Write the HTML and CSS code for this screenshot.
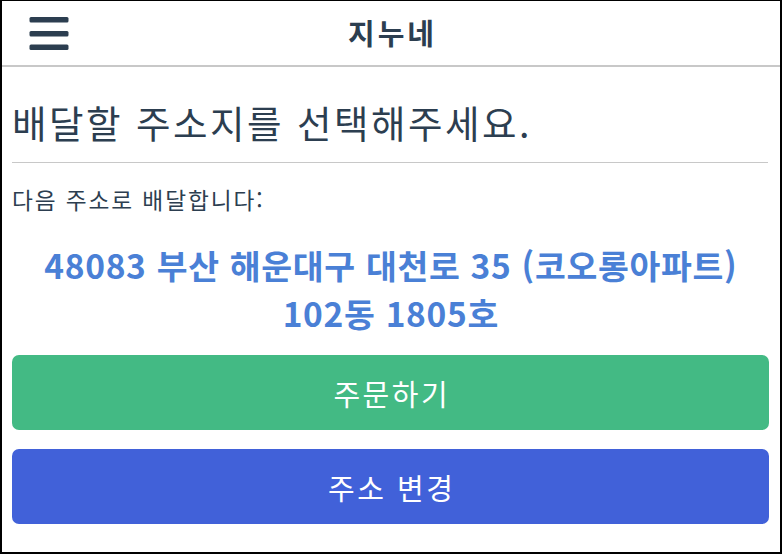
FILE: index.html
```html
<!DOCTYPE html>
<html lang="ko">
<head>
<meta charset="utf-8">
<title>지누네</title>
<link rel="stylesheet" href="styles.css">
</head>
<body>
<div class="app">
  <header class="topbar">
    <button class="menu" aria-label="메뉴">
      <svg width="40" height="34" viewBox="0 0 40 34">
        <rect x="0.5" y="0" width="39" height="5.5" rx="1.5" fill="#2c3e50"/>
        <rect x="0.5" y="14" width="39" height="5.5" rx="1.5" fill="#2c3e50"/>
        <rect x="0.5" y="27.5" width="39" height="5.5" rx="1.5" fill="#2c3e50"/>
      </svg>
    </button>
    <h1 class="brand">지누네</h1>
    <span class="spacer"></span>
  </header>
  <main class="content">
    <h2 class="title">배달할 주소지를 선택해주세요.</h2>
    <p class="label">다음 주소로 배달합니다:</p>
    <p class="address">48083 부산 해운대구 대천로 35 (코오롱아파트)<br>102동 1805호</p>
    <button class="btn btn-order">주문하기</button>
    <button class="btn btn-change">주소 변경</button>
  </main>
</div>
</body>
</html>
```
FILE: styles.css
```css
* { box-sizing: border-box; }
html, body { margin: 0; padding: 0; background: #fff; }
body {
  font-family: "Noto Sans CJK KR", "Noto Sans", sans-serif;
  color: #2c3e50;
}
.app {
  width: 782px;
  height: 554px;
  border: 2px solid #000;
  border-top-width: 1px;
  display: flex;
  flex-direction: column;
}
.topbar {
  height: 66px;
  border-bottom: 2px solid #c8c8c8;
  display: grid;
  grid-template-columns: 1fr auto 1fr;
  align-items: center;
}
.menu {
  justify-self: start;
  margin-left: 27px;
  padding: 0;
  border: 0;
  background: none;
  display: flex;
  margin-top: 1px;
}
.brand {
  margin: 0;
  font-size: 29px;
  font-weight: 700;
  line-height: 1;
  letter-spacing: 3px;
  padding-left: 3px;
  color: #2c3e50;
  margin-top: -2px;
}
.content {
  padding: 0 11px 0 10px;
  display: flex;
  flex-direction: column;
}
.title {
  margin: 31px 0 0;
  font-size: 37.5px;
  font-weight: 400;
  letter-spacing: 2.5px;
  line-height: 48px;
  padding-bottom: 16px;
  border-bottom: 1px solid #c8c8c8;
  margin-right: 1px;
  white-space: nowrap;
}
.label {
  margin: 23px 0 0;
  font-size: 22.7px;
  letter-spacing: 1.9px;
  line-height: 28px;
  color: #2c3e50;
}
.address {
  margin: 27px 0 0;
  text-align: center;
  font-size: 33.5px;
  font-weight: 700;
  letter-spacing: 0.7px;
  padding-left: 0.7px;
  line-height: 48px;
  color: #4a80d6;
}
.btn {
  display: block;
  width: 100%;
  height: 75px;
  border: 0;
  border-radius: 7px;
  color: #fff;
  font-family: inherit;
  font-size: 29px;
  font-weight: 400;
  letter-spacing: 2.5px;
  padding: 0 0 0 2.5px;
}
.btn-order {
  margin-top: 18px;
  background: #43ba84;
}
.btn-change {
  margin-top: 19px;
  background: #4161d9;
}
```
